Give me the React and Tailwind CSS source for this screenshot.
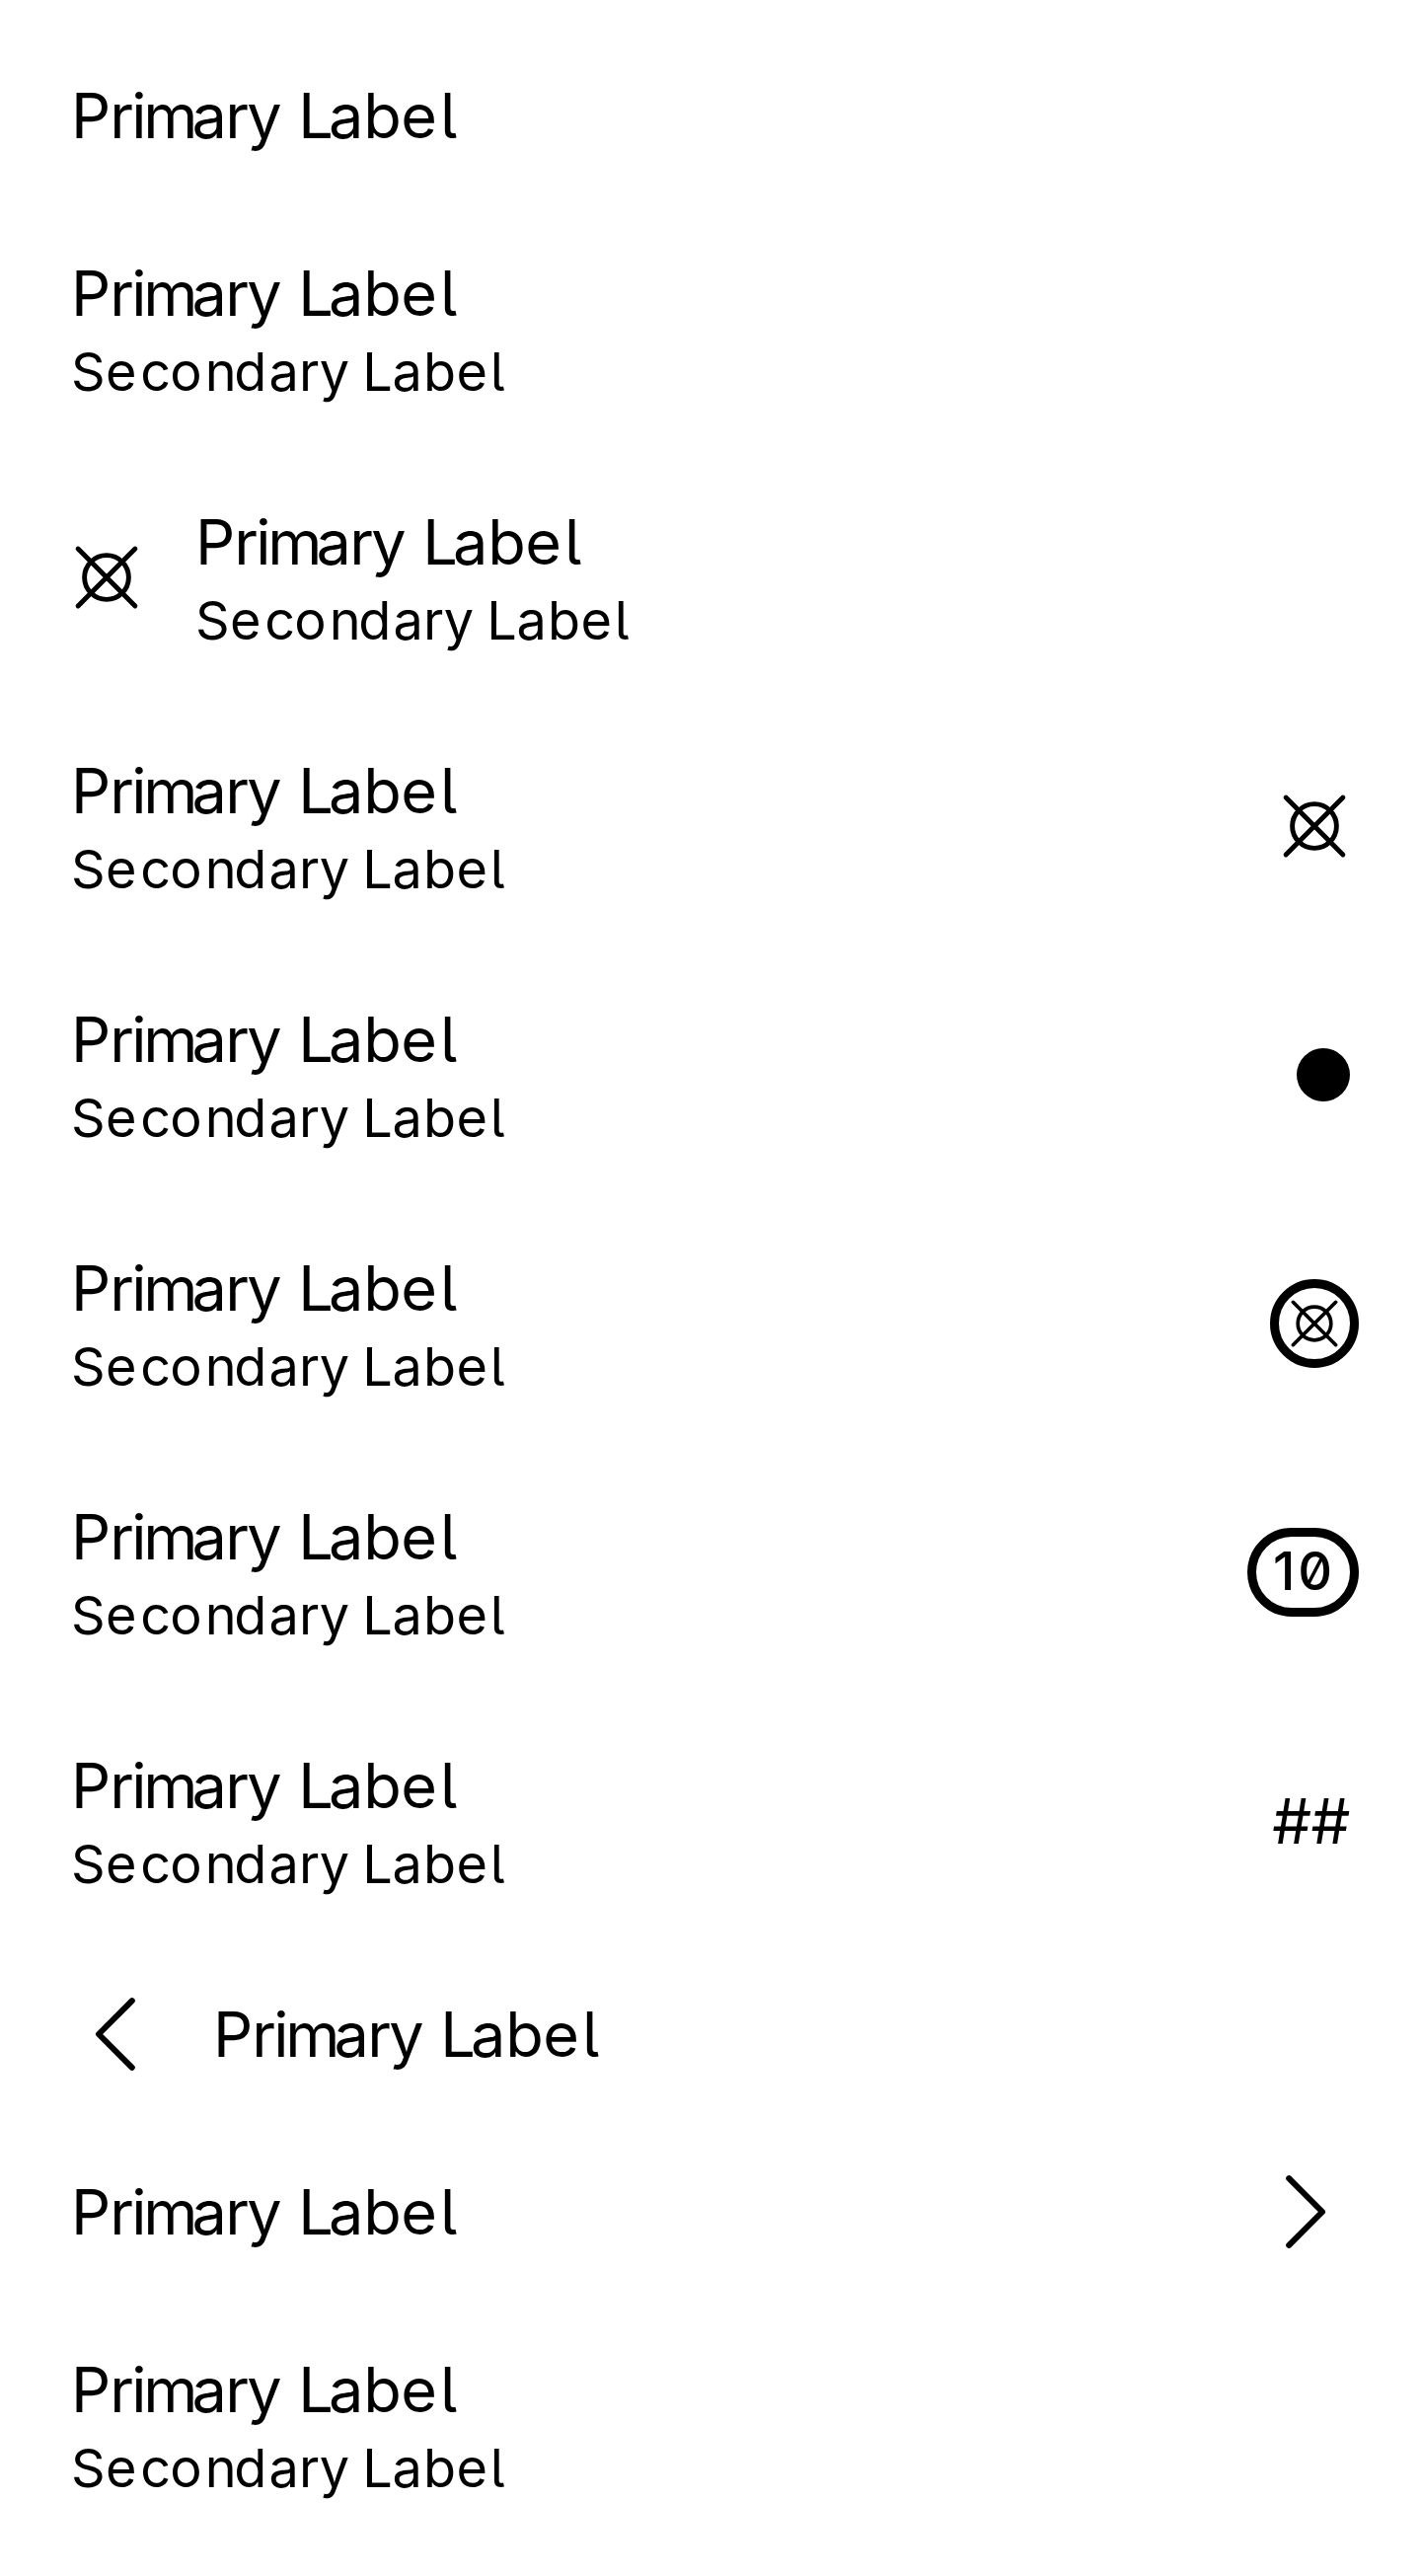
const Icon = ({ className }) => (
  <svg viewBox="0 0 72 72" className={className} fill="none" stroke="black" strokeWidth="4.9" strokeLinecap="round">
    <circle cx="36" cy="36" r="22.4" />
    <path d="M7.1 7.1 64.9 64.9M64.9 7.1 7.1 64.9" />
  </svg>
);

const Chevron = ({ className = "" }) => (
  <svg viewBox="0 0 90 90" className={`size-[90px] ${className}`} fill="none" stroke="black" strokeWidth="6" strokeLinecap="round" strokeLinejoin="round">
    <path d="M61.8 11.2 28 45 61.8 78.8" />
  </svg>
);

// Letter spacing after each character, in pixels.
const PRIMARY = [
  ["P", -1.1], ["r", -1.7], ["i", -3.2], ["m", -6], ["a", -1.6], ["r", -1.7], ["y", -1.1], [" ", 0],
  ["L", -5], ["a", 0], ["b", -0.6], ["e", 3.1], ["l", 0],
];
const SECONDARY = [
  ["S", 0.4], ["e", 3.8], ["c", -0.85], ["o", 3], ["n", -2.3], ["d", 2], ["a", 0.3], ["r", 0.4], ["y", -2], [" ", 0],
  ["L", -0.3], ["a", 1.2], ["b", 0.3], ["e", 2.8], ["l", 0],
];

const Spaced = ({ glyphs }) =>
  glyphs.map(([ch, gap], i) => (
    <span key={i} style={{ letterSpacing: `${gap}px` }}>{ch}</span>
  ));

const Row = ({ single, lead, end }) => (
  <div className={`flex items-center px-[72px] ${single ? "h-[180px]" : "h-[252px]"}`}>
    {lead}
    <div className={`whitespace-pre [font-kerning:none] [font-feature-settings:'cv05'] ${single ? "" : "pt-2"}`}>
      <div className="text-[63px] leading-[80px]"><Spaced glyphs={PRIMARY} /></div>
      {!single && <div className="text-[54px] leading-[80px]"><Spaced glyphs={SECONDARY} /></div>}
    </div>
    <div className="ml-auto">{end}</div>
  </div>
);

export default function App() {
  return (
    <div className="h-[2610px] w-[1440px] overflow-hidden bg-white pt-[27px] font-['Inter',sans-serif] text-black">
      <Row single />
      <Row />
      <Row lead={<Icon className="mr-[54px] size-[72px]" />} />
      <Row end={<Icon className="size-[72px]" />} />
      <Row end={<div className="size-[54px] rounded-full bg-black" />} />
      <Row
        end={
          <div className="-mr-[9px] grid size-[90px] place-items-center rounded-full border-[9px] border-black">
            <Icon className="size-[54px]" />
          </div>
        }
      />
      <Row
        end={
          <div className="-mr-[9px] flex h-[90px] w-[113px] items-center rounded-full border-[9px] border-black pb-[3px] pl-[17px] text-[54px] leading-[69px] font-medium tracking-[2.9px] [font-feature-settings:'zero'] [font-kerning:none]">
            10
          </div>
        }
      />
      <Row end={<div className="text-[63px] leading-[80px] tracking-[-0.5px]">##</div>} />
      <Row single lead={<Chevron className="mr-[54px]" />} />
      <Row single end={<Chevron className="rotate-180" />} />
      <Row />
    </div>
  );
}
